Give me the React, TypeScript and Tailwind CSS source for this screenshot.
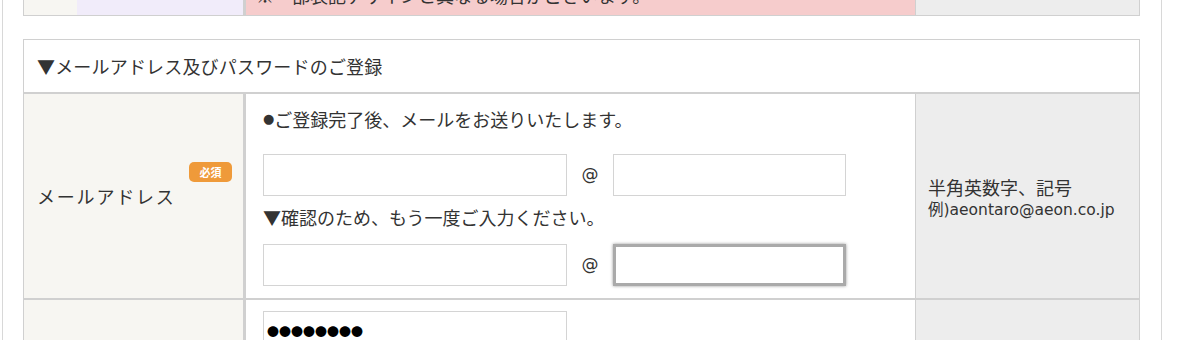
import React from 'react';

const Badge: React.FC = () => (
  <span className="absolute right-[11px] top-[68px] flex h-[20px] w-[43px] items-center justify-center rounded-[5px] bg-[#ef9a3a] text-[11px] font-bold leading-none tracking-normal text-white">
    必須
  </span>
);

const Field: React.FC<{ width: string; focused?: boolean }> = ({ width, focused }) => (
  <div
    className={`h-[42px] bg-white ${width} ${
      focused ? 'border-[3px] border-[#aaa] shadow-[0_0_3px_#999]' : 'border border-[#d4d4d4]'
    }`}
  />
);

const EmailPair: React.FC<{ focused?: boolean }> = ({ focused }) => (
  <div className="flex items-center">
    <Field width="w-[304px]" />
    <span className="w-[46px] text-center font-['DejaVu_Sans',sans-serif] text-[17px]">@</span>
    <Field width="w-[233px]" focused={focused} />
  </div>
);

export default function App() {
  return (
    <div className="h-[340px] overflow-hidden bg-white font-['Noto_Sans_CJK_JP',sans-serif] text-[#333]">
      <div className="ml-[2px] flex h-full w-[1160px] flex-col border-x border-[#d8d8d8] pl-[20px] pr-[21px]">
        {/* top table, only its last row shows */}
        <div className="-mt-[24px] flex h-[40px] shrink-0 border border-[#d0d0d0]">
          <div className="w-[53px] bg-[#f7f6f2]" />
          <div className="w-[169px] border-r-[3px] border-[#d0d0d0] bg-[#f1ecfa]" />
          <div className="flex w-[670px] items-end border-r border-[#d0d0d0] bg-[#f6cccc] pb-[8px] pl-[10px] text-[18px] leading-[24px]">
            ※一部表記デザインと異なる場合がございます。
          </div>
          <div className="flex-1 bg-[#ededed]" />
        </div>

        {/* registration table */}
        <div className="mt-[23px] shrink-0 border border-[#d0d0d0]">
          <div className="flex h-[54px] items-center border-b-[2px] border-[#d0d0d0] pl-[13px] text-[18px] tracking-[0.01em]">
            ▼メールアドレス及びパスワードのご登録
          </div>

          <div className="flex h-[206px] border-b-[2px] border-[#d0d0d0]">
            <div className="relative flex w-[222px] items-center border-r-[3px] border-[#d0d0d0] bg-[#f7f6f2] pl-[13px] text-[18px] tracking-[0.1em]">
              メールアドレス
              <Badge />
            </div>
            <div className="w-[670px] border-r border-[#d0d0d0] pl-[17px] pt-[12px]">
              <p className="flex h-[26px] items-center text-[18px] leading-[26px]">
                <span className="relative -top-[1px] font-['DejaVu_Sans',sans-serif] text-[13px] leading-none">●</span>
                ご登録完了後、メールをお送りいたします。
              </p>
              <div className="mt-[22px]">
                <EmailPair />
              </div>
              <p className="mt-[8px] text-[18px] leading-[26px]">▼確認のため、もう一度ご入力ください。</p>
              <div className="mt-[14px]">
                <EmailPair focused />
              </div>
            </div>
            <div className="flex flex-1 flex-col justify-center bg-[#ededed] pl-[12px] pt-[4px]">
              <p className="text-[18px] leading-[24px]">半角英数字、記号</p>
              <p className="font-['DejaVu_Sans','Noto_Sans_CJK_JP',sans-serif] text-[15.5px] leading-[22px]">
                例)aeontaro@aeon.co.jp
              </p>
            </div>
          </div>

          <div className="flex h-[60px]">
            <div className="w-[222px] border-r-[3px] border-[#d0d0d0] bg-[#f7f6f2]" />
            <div className="w-[670px] border-r border-[#d0d0d0] pl-[17px] pt-[11px]">
              <div className="flex h-[42px] w-[304px] items-center border border-[#d4d4d4] bg-white pl-[3px] text-[12px] leading-none text-black">
                ●●●●●●●●
              </div>
            </div>
            <div className="flex-1 bg-[#ededed]" />
          </div>
        </div>
      </div>
    </div>
  );
}
